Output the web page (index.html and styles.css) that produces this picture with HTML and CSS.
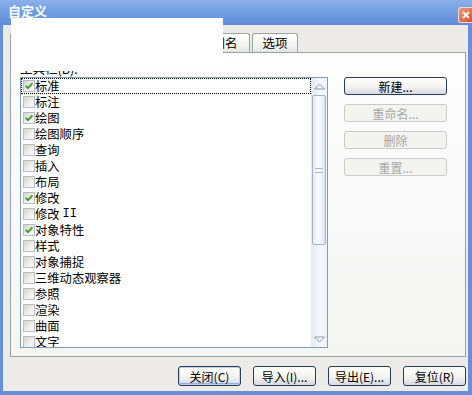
FILE: index.html
```html
<!DOCTYPE html>
<html lang="zh-CN">
<head>
  <meta charset="UTF-8">
  <title>自定义</title>
  <link rel="stylesheet" href="styles.css">
</head>
<body>
  <div class="window">
    <div class="titlebar">
      <span class="title">自定义</span>
      <span class="close">
        <svg width="8" height="8" viewBox="0 0 8 8"><path d="M1 1 L7 7 M7 1 L1 7" stroke="#fff" stroke-width="1.8"/></svg>
      </span>
    </div>
    <div class="client">
      <div class="tabs">
        <div class="tab active">工具栏</div>
        <div class="tab">命令</div>
        <div class="tab">特性</div>
        <div class="tab">键盘</div>
        <div class="tab wide">别名</div>
        <div class="tab last">选项</div>
      </div>
      <div class="panel">
        <div class="label">工具栏(B):</div>
        <div class="panel-body">
          <div class="listbox">
            <ul class="items">
              <li class="item focus"><span class="check on"><svg viewBox="0 0 10 10"><path d="M1.8 4.8 L4 7.2 L8.4 2.4"/></svg></span>标准</li>
              <li class="item"><span class="check"></span>标注</li>
              <li class="item"><span class="check on"><svg viewBox="0 0 10 10"><path d="M1.8 4.8 L4 7.2 L8.4 2.4"/></svg></span>绘图</li>
              <li class="item"><span class="check"></span>绘图顺序</li>
              <li class="item"><span class="check"></span>查询</li>
              <li class="item"><span class="check"></span>插入</li>
              <li class="item"><span class="check"></span>布局</li>
              <li class="item"><span class="check on"><svg viewBox="0 0 10 10"><path d="M1.8 4.8 L4 7.2 L8.4 2.4"/></svg></span>修改</li>
              <li class="item"><span class="check"></span>修改 <span class="roman">II</span></li>
              <li class="item"><span class="check on"><svg viewBox="0 0 10 10"><path d="M1.8 4.8 L4 7.2 L8.4 2.4"/></svg></span>对象特性</li>
              <li class="item"><span class="check"></span>样式</li>
              <li class="item"><span class="check"></span>对象捕捉</li>
              <li class="item"><span class="check"></span>三维动态观察器</li>
              <li class="item"><span class="check"></span>参照</li>
              <li class="item"><span class="check"></span>渲染</li>
              <li class="item"><span class="check"></span>曲面</li>
              <li class="item"><span class="check"></span>文字</li>
            </ul>
            <div class="scrollbar">
              <div class="sb-btn">
                <svg width="11" height="7" viewBox="0 0 11 7"><path d="M0.5 6 L5.5 1 L10.5 6 Z" fill="none" stroke="#8e97a8"/></svg>
              </div>
              <div class="sb-track">
                <div class="sb-thumb"><span class="grip"></span></div>
              </div>
              <div class="sb-btn">
                <svg width="11" height="7" viewBox="0 0 11 7"><path d="M0.5 1 L5.5 6 L10.5 1 Z" fill="none" stroke="#8e97a8"/></svg>
              </div>
            </div>
          </div>
          <div class="side">
            <button class="btn">新建...</button>
            <button class="btn" disabled>重命名...</button>
            <button class="btn" disabled>删除</button>
            <button class="btn" disabled>重置...</button>
          </div>
        </div>
      </div>
      <div class="footer">
        <button class="btn default">关闭(C)</button>
        <button class="btn">导入(I)...</button>
        <button class="btn">导出(E)...</button>
        <button class="btn">复位(R)</button>
      </div>
    </div>
    <div class="mask"></div>
  </div>
</body>
</html>
```

FILE: styles.css
```css
body {
  margin: 0;
  font-family: "Noto Sans CJK SC", "Liberation Sans", sans-serif;
  font-size: 12px;
  color: #000;
}
.window {
  position: relative;
  width: 472px;
  height: 395px;
  background: #6890d8;
  display: flex;
  flex-direction: column;
  overflow: hidden;
}
.titlebar {
  height: 25px;
  flex: none;
  display: flex;
  justify-content: space-between;
  background: linear-gradient(180deg, #8cb0ea 0%, #739fe2 45%, #5f8ddb 100%);
}
.title {
  color: #fff;
  font-weight: bold;
  font-size: 13px;
  line-height: 13px;
  padding: 4px 0 0 8px;
}
.close {
  width: 14px;
  height: 16px;
  margin-top: 7px;
  box-sizing: border-box;
  border: 1px solid #f3d6cf;
  border-right: none;
  border-radius: 3px 0 0 3px;
  background: linear-gradient(135deg, #ee9a82, #d8502c);
  display: flex;
  align-items: center;
  justify-content: center;
}
.client {
  flex: 1;
  margin: 0 4px 4px 3px;
  background: #ecebe8;
  padding: 8px 2px 5px 7px;
  display: flex;
  flex-direction: column;
}
.tabs {
  display: flex;
  align-items: flex-end;
  gap: 2px;
  height: 19px;
  flex: none;
}
.tab {
  width: 42px;
  height: 19px;
  box-sizing: border-box;
  border: 1px solid #9aa2a4;
  border-bottom: none;
  border-radius: 3px 3px 0 0;
  background: linear-gradient(180deg, #ffffff, #f1f1ee 70%, #e4e4df);
  text-align: center;
  font-size: 12.5px;
  line-height: 17px;
}
.tab.active {
  width: 56px;
  height: 21px;
  margin-bottom: -1px;
  border-top: 2px solid #f0a030;
  background: #fcfcfe;
}
.tab.wide {
  width: 50px;
}
.tab.last {
  width: 46px;
}
.panel {
  height: 305px;
  box-sizing: border-box;
  border: 1px solid #9aa2a4;
  background: linear-gradient(180deg, #fdfdfe, #f5f5f4);
  padding: 9px 0 0 9px;
}
.label {
  height: 14px;
  line-height: 14px;
  font-size: 12.5px;
  margin-bottom: 1px;
}
.panel-body {
  display: flex;
  align-items: flex-start;
  gap: 16px;
}
.listbox {
  width: 308px;
  height: 271px;
  box-sizing: border-box;
  border: 1px solid #7f9db9;
  background: #fff;
  display: flex;
  overflow: hidden;
}
.items {
  flex: 1;
  list-style: none;
  margin: 0;
  padding: 0;
}
.item {
  display: flex;
  align-items: center;
  height: 16px;
  padding-left: 2px;
  font-size: 12.3px;
  line-height: 16px;
  white-space: nowrap;
}
.item.focus {
  outline: 1px dotted #000;
  outline-offset: -1px;
}
.roman {
  font-family: "Liberation Mono", monospace;
  font-size: 12px;
  margin-left: 3px;
}
.check {
  width: 12px;
  height: 12px;
  flex: none;
  box-sizing: border-box;
  border: 1px solid #b9bcc2;
  background: linear-gradient(135deg, #d4d4cf, #f3f3f1 70%, #fff);
  display: flex;
  align-items: center;
  justify-content: center;
}
.check svg {
  width: 10px;
  height: 10px;
  fill: none;
  stroke: #3e9a2c;
  stroke-width: 1.8;
}
.scrollbar {
  width: 16px;
  flex: none;
  display: flex;
  flex-direction: column;
  background: linear-gradient(90deg, #e3e8f1, #f6f8fb 60%, #eef1f6);
}
.sb-btn {
  height: 16px;
  flex: none;
  display: flex;
  align-items: center;
  justify-content: center;
}
.sb-track {
  flex: 1;
  padding-top: 1px;
}
.sb-thumb {
  height: 150px;
  margin: 0 1px;
  box-sizing: border-box;
  border: 1px solid #a9b2c2;
  border-radius: 2px;
  background: linear-gradient(90deg, #e4e9f3, #fbfcfe 45%, #dde3ef);
  display: flex;
  align-items: center;
  justify-content: center;
}
.grip {
  width: 8px;
  height: 3px;
  border-top: 1px solid #b4bccb;
  border-bottom: 1px solid #b4bccb;
}
.side {
  display: flex;
  flex-direction: column;
  gap: 9px;
}
.btn {
  width: 103px;
  height: 18px;
  box-sizing: border-box;
  padding: 0;
  border: 1px solid #2a3b55;
  border-radius: 3px;
  background: linear-gradient(180deg, #ffffff, #f3f3f0 55%, #d6d9e5);
  font-family: inherit;
  font-size: 12px;
  line-height: 15px;
  color: #000;
  text-align: center;
}
.btn:disabled {
  border-color: #cacac6;
  background: #f3f3f1;
  color: #a6a6a2;
}
.footer {
  display: flex;
  justify-content: flex-end;
  gap: 12px;
  margin-top: 9px;
}
.footer .btn {
  width: 63px;
  height: 20px;
  line-height: 17px;
}
.btn.default {
  box-shadow: inset 0 0 0 1px #bcd0f3, inset 0 -2px 0 #8eaee6;
}
.mask {
  position: absolute;
  left: 11px;
  top: 18px;
  width: 212px;
  height: 53px;
  background: #fff;
}
```
